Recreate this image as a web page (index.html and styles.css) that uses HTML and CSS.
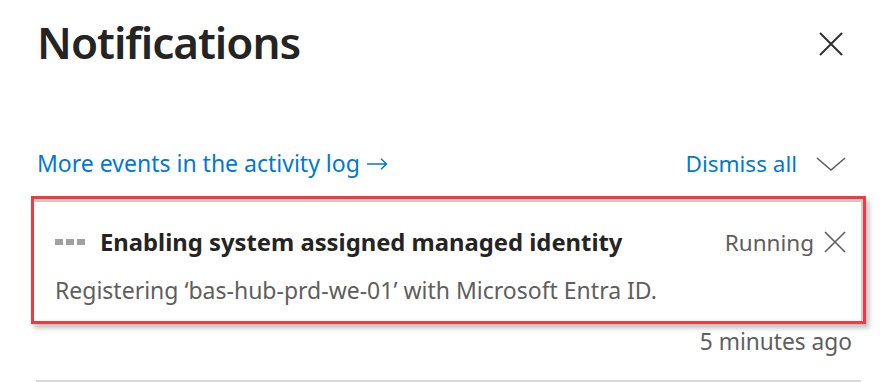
FILE: index.html
```html
<!DOCTYPE html>
<html>
<head>
<meta charset="utf-8">
<link rel="stylesheet" href="styles.css">
</head>
<body>
<div class="panel">
  <div class="header">
    <h1 class="title">Notifications</h1>
    <button class="close" aria-label="Close">
      <svg width="24" height="24" viewBox="0 0 24 24"><path d="M1 1 L23 23 M23 1 L1 23" stroke="#323130" stroke-width="2" fill="none"/></svg>
    </button>
  </div>
  <div class="toolbar">
    <a class="link link-log">More events in the activity log<svg class="arrow" width="21" height="12" viewBox="0 0 21 12"><path d="M0 6 H19.5 M14 0.8 L19.5 6 L14 11.2" stroke="#0078d4" stroke-width="1.5" fill="none"/></svg></a>
    <div class="actions">
      <a class="link">Dismiss all</a>
      <svg class="chev" width="30" height="14" viewBox="0 0 30 14"><path d="M1 1 L15 13 L29 1" stroke="#605e5c" stroke-width="1.6" fill="none"/></svg>
    </div>
  </div>
  <div class="highlight">
    <div class="card">
      <div class="card-row">
        <div class="dots"><span></span><span></span><span></span></div>
        <div class="card-title">Enabling system assigned managed identity</div>
        <div class="status">Running</div>
        <svg class="card-x" width="22" height="22" viewBox="0 0 22 22"><path d="M1 1 L21 21 M21 1 L1 21" stroke="#605e5c" stroke-width="1.6" fill="none"/></svg>
      </div>
      <div class="desc">Registering ‘bas-hub-prd-we-01’ with Microsoft Entra ID.</div>
    </div>
  </div>
  <div class="time">5 minutes ago</div>
  <div class="divider"></div>
</div>
</body>
</html>
```
FILE: styles.css
```css
* { box-sizing: border-box; }
html, body { margin: 0; padding: 0; background: #fff; }
body { font-family: "Noto Sans", "Open Sans", sans-serif; color: #323130; }
.panel { width: 895px; height: 382px; padding: 0 0 0 31px; overflow: hidden; }
.header { display: flex; justify-content: space-between; align-items: flex-start; padding: 12px 52px 0 6px; height: 140px; }
.title { margin: 0; font-size: 44px; font-weight: 600; line-height: 60px; letter-spacing: -1px; color: #252423; }
.close { margin-top: 20px; background: none; border: 0; padding: 0; width: 24px; height: 24px; }
.close svg { display: block; }
.toolbar { display: flex; justify-content: space-between; align-items: center; padding: 0 49px 0 6px; height: 46px; }
.link { color: #0078d4; font-size: 22.5px; text-decoration: none; display: inline-flex; align-items: center; }
.link-log { font-size: 23px; }
.arrow { display: block; margin-left: 7px; margin-top: 2px; }
.actions { display: flex; align-items: center; gap: 19px; }
.chev { display: block; margin-top: 2px; }
.highlight { width: 835px; border: 3px solid #f2393f; margin-top: 10px; box-shadow: 3px 4px 5px rgba(0,0,0,0.25); }
.card { border-top: 3px solid #c8c8c8; border-right: 2px solid #d0d0d0; padding: 23px 15px 17px 21px; }
.card-row { display: flex; align-items: center; height: 34px; }
.dots { display: flex; gap: 3px; margin-right: 15px; }
.dots span { width: 8px; height: 6px; background: #a0a0a0; }
.card-title { font-size: 23.8px; font-weight: 700; color: #252423; flex: 1; white-space: nowrap; }
.status { font-size: 22.5px; color: #605e5c; margin-right: 10px; }
.card-x { display: block; }
.desc { font-size: 23px; color: #605e5c; margin-top: 17px; line-height: 28px; white-space: nowrap; }
.time { text-align: right; font-size: 22.7px; color: #605e5c; padding-right: 43px; margin-top: 1px; line-height: 34px; }
.divider { width: 825px; margin: 21px 0 0 5px; border-top: 2px solid #d9d9d9; }
```
